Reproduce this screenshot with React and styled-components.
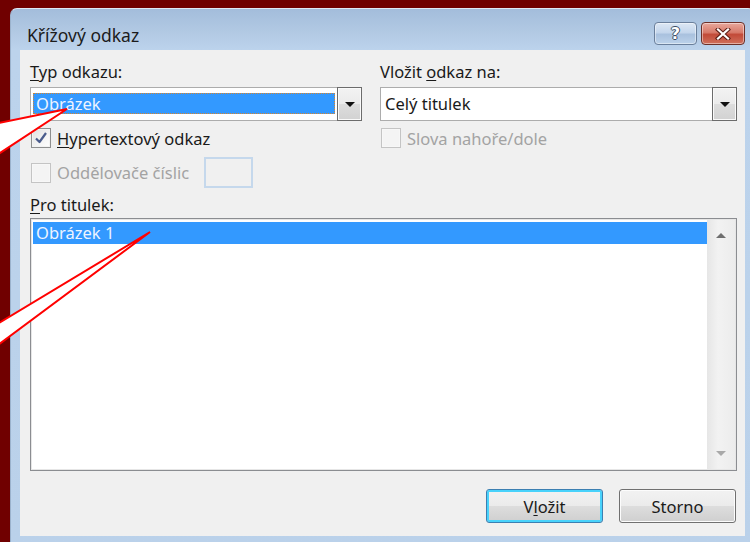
import React from "react";
import styled, { createGlobalStyle } from "styled-components";

const Global = createGlobalStyle`
  html, body { margin: 0; padding: 0; }
  body {
    width: 750px;
    height: 542px;
    overflow: hidden;
    background: #700000;
    font-family: "Noto Sans", "Open Sans", sans-serif;
    font-size: 16.5px;
    color: #1a1a1a;
  }
`;

const Page = styled.div`
  position: relative;
  width: 750px;
  height: 542px;
  box-sizing: border-box;
  padding: 8px 0 0 10px;
  overflow: hidden;
`;

const Window = styled.div`
  width: 745px;
  height: 540px;
  box-sizing: border-box;
  padding: 0 10px 0 10px;
  border-radius: 7px 7px 0 0;
  border-top: 1px solid #dfe9f5;
  border-left: 1px solid #9bb2cc;
  background: linear-gradient(to bottom, #a3bddb 0, #b3cae4 25px, #bcd3ec 41px, #bad1ea 100%);
  display: flex;
  flex-direction: column;
`;

const TitleBar = styled.div`
  height: 41px;
  display: flex;
  align-items: flex-start;
  margin-left: -1px;
`;

const Title = styled.div`
  margin: 16px 0 0 7px;
  line-height: 20px;
  font-size: 17.5px;
  color: #1c1c1c;
  flex: 1;
`;

const CaptionButton = styled.div`
  width: ${p => (p.$close ? 44 : 43)}px;
  height: 23px;
  margin-top: 13px;
  margin-left: ${p => (p.$close ? 4 : 0)}px;
  box-sizing: border-box;
  border-radius: 4px;
  border: 1px solid ${p => (p.$close ? "#6c3028" : "#6a7f9b")};
  background: ${p =>
    p.$close
      ? "linear-gradient(to bottom, #e8a89c 0%, #d77a6a 45%, #c24a38 55%, #d0705c 100%)"
      : "linear-gradient(to bottom, #dce7f4 0%, #c4d6ec 45%, #a9c1de 55%, #bcd2ea 100%)"};
  box-shadow: inset 0 0 0 1px rgba(255, 255, 255, 0.45);
  display: flex;
  align-items: center;
  justify-content: center;
  color: #fff;
  font-family: "DejaVu Sans", sans-serif;
  font-weight: bold;
  font-size: 16px;
  line-height: 1;
  text-shadow: -1px 0 #3c4c63, 1px 0 #3c4c63, 0 -1px #3c4c63, 0 1px #3c4c63;
`;

const Client = styled.div`
  margin-left: -1px;
  height: 486px;
  box-sizing: border-box;
  background: #f0f0f0;
  padding: 12px 8px 0 10px;
  display: flex;
  flex-direction: column;
`;

const Columns = styled.div`
  display: grid;
  grid-template-columns: 332px 357px;
  column-gap: 18px;
`;

const Column = styled.div`
  display: flex;
  flex-direction: column;
`;

const Label = styled.div`
  line-height: 20px;
  height: 20px;
  margin-top: ${p => p.$top || 0}px;
  white-space: nowrap;
`;

const Key = styled.span`
  text-decoration: underline;
  text-underline-offset: 2px;
`;

const Combo = styled.div`
  margin-top: 5px;
  height: 34px;
  box-sizing: border-box;
  border: 1px solid #acacac;
  background: #fff;
  display: flex;
`;

const ComboField = styled.div`
  flex: 1;
  padding: 5px 2px 0 2px;
`;

const Selected = styled.div`
  height: 21px;
  box-sizing: border-box;
  line-height: 19px;
  padding-left: 2px;
  background: #3399ff;
  color: #eef4ff;
  border: 1px dotted #d9852c;
`;

const ComboText = styled.div`
  flex: 1;
  line-height: 32px;
  padding-left: 4px;
`;

const DropButton = styled.div`
  width: 25px;
  margin: -1px -1px -1px 0;
  box-sizing: border-box;
  border: 1px solid #6c6c6c;
  box-shadow: inset 0 0 0 1px #fafafa;
  background: linear-gradient(to bottom, #f3f3f3 0%, #ebebeb 50%, #dddddd 51%, #d2d2d2 100%);
  display: flex;
  align-items: center;
  justify-content: center;

  &::after {
    content: "";
    border-left: 5px solid transparent;
    border-right: 5px solid transparent;
    border-top: 5px solid #111;
    margin-top: 1px;
  }
`;

const CheckRow = styled.div`
  margin-top: ${p => p.$top}px;
  height: ${p => p.$h || 20}px;
  display: flex;
  align-items: center;
  color: ${p => (p.$disabled ? "#a3a3a3" : "#1a1a1a")};
  white-space: nowrap;
`;

const Box = styled.div`
  width: 20px;
  height: 20px;
  margin-left: 1px;
  margin-right: 6px;
  box-sizing: border-box;
  border: 1px solid ${p => (p.$disabled ? "#c4c4c4" : "#8e8f8f")};
  background: ${p =>
    p.$disabled ? "#f4f4f4" : "linear-gradient(135deg, #dedede 0%, #f4f4f4 60%, #ffffff 100%)"};
  box-shadow: inset 0 0 0 1px ${p => (p.$disabled ? "#f7f7f7" : "#f2f2f2")};
  display: flex;
  align-items: center;
  justify-content: center;
`;

const SmallInput = styled.div`
  width: 49px;
  height: 31px;
  margin-left: 15px;
  box-sizing: border-box;
  border: 2px solid #c5d8ec;
  background: #f0f0f0;
`;

const ListBox = styled.div`
  margin-top: 3px;
  height: 253px;
  box-sizing: border-box;
  border: 1px solid #8b8d91;
  box-shadow: inset 0 0 0 1px #e6e6e6;
  background: #fff;
  display: flex;
`;

const ListItems = styled.div`
  flex: 1;
  padding: 3px 0 0 2px;
`;

const ListRow = styled.div`
  height: 22px;
  line-height: 22px;
  padding-left: 3px;
  background: ${p => (p.$selected ? "#3399ff" : "transparent")};
  color: ${p => (p.$selected ? "#eef4ff" : "#1a1a1a")};
`;

const ScrollBar = styled.div`
  width: 28px;
  margin: 1px 1px 1px 0;
  background: linear-gradient(to right, #e6e6e6, #f2f2f2 40%, #ececec);
  display: flex;
  flex-direction: column;
  justify-content: space-between;
  align-items: center;
  padding: 13px 0 13px;
  box-sizing: border-box;
`;

const Arrow = styled.div`
  border-left: 5px solid transparent;
  border-right: 5px solid transparent;
  ${p =>
    p.$up
      ? "border-bottom: 5px solid #6f6f6f;"
      : "border-top: 5px solid #a9a9a9;"}
`;

const ButtonRow = styled.div`
  margin-top: 18px;
  display: flex;
  justify-content: flex-end;
  gap: 16px;
  padding-right: 1px;
`;

const Button = styled.div`
  width: 117px;
  height: 34px;
  box-sizing: border-box;
  border-radius: 3px;
  border: 1px solid ${p => (p.$default ? "#3c7fb1" : "#707070")};
  box-shadow: inset 0 0 0 ${p => (p.$default ? "2px #48d2fb" : "1px #fcfcfc")};
  background: linear-gradient(to bottom, #f2f2f2 0%, #ebebeb 50%, #dddddd 51%, #cfcfcf 100%);
  display: flex;
  align-items: center;
  justify-content: center;
  color: #1a1a1a;
`;

const Callouts = styled.svg`
  position: absolute;
  left: 0;
  top: 0;
  pointer-events: none;
`;

const Check = () => (
  <svg width="14" height="14" viewBox="0 0 14 14">
    <path d="M2 7.5 L5.5 11 L12 2" fill="none" stroke="#4a5c8c" strokeWidth="2.2" strokeLinejoin="round" />
  </svg>
);

const CloseGlyph = () => (
  <svg width="18" height="12" viewBox="0 0 18 12">
    <path d="M4 1.5 L14 10.5 M14 1.5 L4 10.5" stroke="#5a1c14" strokeWidth="4.2" strokeLinecap="square" />
    <path d="M4 1.5 L14 10.5 M14 1.5 L4 10.5" stroke="#ffffff" strokeWidth="2.2" strokeLinecap="square" />
  </svg>
);

export default function App() {
  return (
    <>
      <Global />
      <Page>
        <Window>
          <TitleBar>
            <Title>Křížový odkaz</Title>
            <CaptionButton>?</CaptionButton>
            <CaptionButton $close>
              <CloseGlyph />
            </CaptionButton>
          </TitleBar>
          <Client>
            <Columns>
              <Column>
                <Label>
                  <Key>T</Key>yp odkazu:
                </Label>
                <Combo>
                  <ComboField>
                    <Selected>Obrázek</Selected>
                  </ComboField>
                  <DropButton />
                </Combo>
                <CheckRow $top={7}>
                  <Box>
                    <Check />
                  </Box>
                  <span>
                    <Key>H</Key>ypertextový odkaz
                  </span>
                </CheckRow>
                <CheckRow $top={9} $h={31} $disabled>
                  <Box $disabled />
                  <span>Oddělovače číslic</span>
                  <SmallInput />
                </CheckRow>
              </Column>
              <Column>
                <Label>
                  Vložit <Key>o</Key>dkaz na:
                </Label>
                <Combo>
                  <ComboText>Celý titulek</ComboText>
                  <DropButton />
                </Combo>
                <CheckRow $top={7} $disabled>
                  <Box $disabled />
                  <span>Slova nahoře/dole</span>
                </CheckRow>
              </Column>
            </Columns>
            <Label $top={7}>
              <Key>P</Key>ro titulek:
            </Label>
            <ListBox>
              <ListItems>
                <ListRow $selected>Obrázek 1</ListRow>
              </ListItems>
              <ScrollBar>
                <Arrow $up />
                <Arrow />
              </ScrollBar>
            </ListBox>
            <ButtonRow>
              <Button $default>
                <span>
                  V<Key>l</Key>ožit
                </span>
              </Button>
              <Button>Storno</Button>
            </ButtonRow>
          </Client>
        </Window>
        <Callouts width="750" height="542" viewBox="0 0 750 542">
          <polygon points="67,109 -6,124 -6,157" fill="#fff" stroke="#ff0000" strokeWidth="2" />
          <polygon points="150,232 -6,326 -6,348" fill="#fff" stroke="#ff0000" strokeWidth="2" />
        </Callouts>
      </Page>
    </>
  );
}
